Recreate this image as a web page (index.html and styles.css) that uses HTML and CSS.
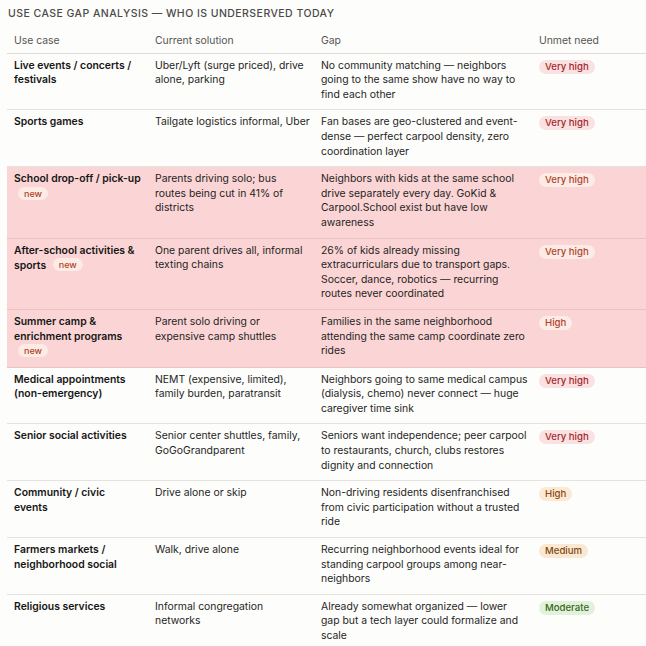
FILE: index.html
```html
<!DOCTYPE html>
<html lang="en">
<head>
<meta charset="utf-8">
<title>Use case gap analysis</title>
<link rel="stylesheet" href="styles.css">
</head>
<body>
<div class="page">
  <h2 class="title">Use case gap analysis — who is underserved today</h2>
  <table class="gap-table">
    <colgroup>
      <col class="c-use">
      <col class="c-cur">
      <col class="c-gap">
      <col class="c-need">
    </colgroup>
    <thead>
      <tr>
        <th>Use case</th>
        <th>Current solution</th>
        <th>Gap</th>
        <th>Unmet need</th>
      </tr>
    </thead>
    <tbody>
      <tr>
        <td class="use">Live events / concerts / festivals</td>
        <td>Uber/Lyft (surge priced), drive alone, parking</td>
        <td>No community matching — neighbors going to the same show have no way to find each other</td>
        <td><span class="pill vhigh">Very high</span></td>
      </tr>
      <tr>
        <td class="use">Sports games</td>
        <td>Tailgate logistics informal, Uber</td>
        <td>Fan bases are geo-clustered and event-dense — perfect carpool density, zero coordination layer</td>
        <td><span class="pill vhigh">Very high</span></td>
      </tr>
      <tr class="hl">
        <td class="use">School drop-off / pick-up <span class="new">new</span></td>
        <td>Parents driving solo; bus<br>routes being cut in 41% of districts</td>
        <td>Neighbors with kids at the same school drive separately every day. GoKid &amp; Carpool.School exist but have low awareness</td>
        <td><span class="pill hl-pill">Very high</span></td>
      </tr>
      <tr class="hl">
        <td class="use">After-school activities &amp; sports <span class="new">new</span></td>
        <td>One parent drives all, informal texting chains</td>
        <td>26% of kids already missing extracurriculars due to transport gaps. Soccer, dance, robotics — recurring routes never coordinated</td>
        <td><span class="pill hl-pill">Very high</span></td>
      </tr>
      <tr class="hl">
        <td class="use">Summer camp &amp; enrichment programs <span class="new">new</span></td>
        <td>Parent solo driving or expensive camp shuttles</td>
        <td>Families in the same neighborhood attending the same camp coordinate zero rides</td>
        <td><span class="pill hl-pill">High</span></td>
      </tr>
      <tr>
        <td class="use">Medical appointments (non-emergency)</td>
        <td>NEMT (expensive, limited), family burden, paratransit</td>
        <td>Neighbors going to same medical campus (dialysis, chemo) never connect — huge caregiver time sink</td>
        <td><span class="pill vhigh">Very high</span></td>
      </tr>
      <tr>
        <td class="use">Senior social activities</td>
        <td>Senior center shuttles, family, GoGoGrandparent</td>
        <td>Seniors want independence; peer carpool to restaurants, church, clubs restores dignity and connection</td>
        <td><span class="pill vhigh">Very high</span></td>
      </tr>
      <tr>
        <td class="use">Community / civic<br>events</td>
        <td>Drive alone or skip</td>
        <td>Non-driving residents disenfranchised from civic participation without a trusted ride</td>
        <td><span class="pill high">High</span></td>
      </tr>
      <tr>
        <td class="use">Farmers markets / neighborhood social</td>
        <td>Walk, drive alone</td>
        <td>Recurring neighborhood events ideal for standing carpool groups among near-neighbors</td>
        <td><span class="pill medium">Medium</span></td>
      </tr>
      <tr>
        <td class="use">Religious services</td>
        <td>Informal congregation<br>networks</td>
        <td>Already somewhat organized — lower<br>gap but a tech layer could formalize and scale</td>
        <td><span class="pill moderate">Moderate</span></td>
      </tr>
    </tbody>
  </table>
</div>
</body>
</html>
```
FILE: styles.css
```css
html, body {
  margin: 0;
  padding: 0;
  background: #fdfdfb;
}
body {
  font-family: Inter, "Liberation Sans", Arial, sans-serif;
  font-size: 10.4px;
  line-height: 14.6px;
  color: #1f1f1f;
  overflow: hidden;
}
.page {
  padding: 7px 0 0 7px;
}
.title {
  margin: 0 0 5px 1px;
  font-size: 10.5px;
  line-height: 14px;
  font-weight: 500;
  text-transform: uppercase;
  letter-spacing: 0.45px;
  color: #4a4a4a;
}
.gap-table {
  width: 640px;
  border-collapse: collapse;
  table-layout: fixed;
}
.c-use { width: 141px; }
.c-cur { width: 166px; }
.c-gap { width: 218px; }
.c-need { width: 115px; }
.gap-table th {
  text-align: left;
  font-weight: 400;
  color: #555;
  padding: 8px 2px 4px 7px;
  border-bottom: 1px solid #dedcd8;
}
.gap-table td {
  vertical-align: top;
  padding: 5px 2px 7px 7px;
  border-top: 1px solid #e4e2de;
}
.gap-table td.use {
  padding-right: 4px;
  font-weight: 600;
  color: #161616;
}
.gap-table tr.hl td {
  background: #fbd5d5;
  border-top-color: #ecc3c3;
}
.gap-table tr:not(.hl) + tr.hl td {
  border-top-color: #e4e2de;
}
.gap-table tr.hl + tr:not(.hl) td {
  border-top-color: #ecc3c3;
}
.pill {
  display: inline-block;
  padding: 0 6px;
  border-radius: 8px;
  font-size: 9.6px;
  line-height: 14px;
  font-weight: 500;
  margin-top: 1px;
}
.pill.vhigh { background: #fbe2e2; color: #a3262b; }
.pill.hl-pill { background: #fdebe5; color: #b0432b; }
.pill.high { background: #fbe9d6; color: #8a4a12; }
.pill.medium { background: #fbe8d3; color: #7a4910; }
.pill.moderate { background: #e4f1da; color: #2f6a22; }
.new {
  display: inline-block;
  margin-left: 4px;
  padding: 0 6px;
  border-radius: 7px;
  background: #fdebe5;
  color: #b0432b;
  font-size: 9px;
  line-height: 13px;
  font-weight: 500;
  vertical-align: 1px;
}
```
